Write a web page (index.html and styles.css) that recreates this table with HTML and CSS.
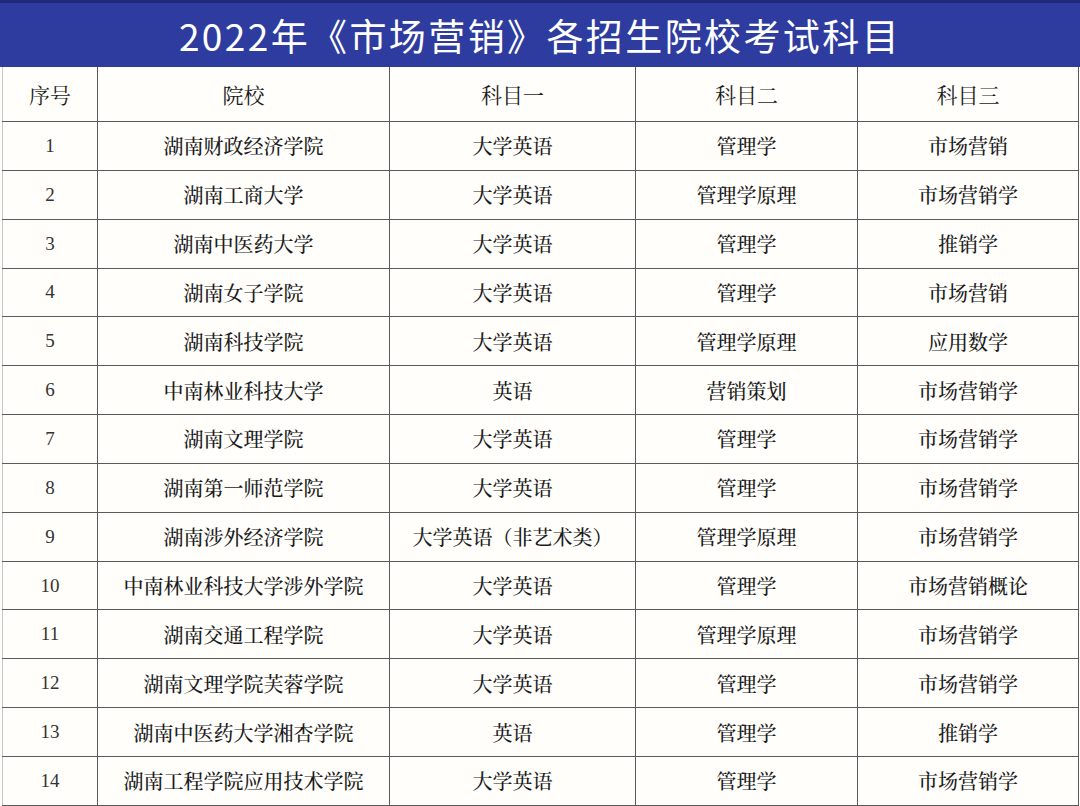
FILE: index.html
```html
<!DOCTYPE html>
<html lang="zh-CN">
<head>
<meta charset="utf-8">
<title>2022年《市场营销》各招生院校考试科目</title>
<link rel="stylesheet" href="styles.css">
</head>
<body>
<div class="page">
  <div class="title">2022年《市场营销》各招生院校考试科目</div>
  <table class="grid">
    <colgroup>
      <col class="c1"><col class="c2"><col class="c3"><col class="c4"><col class="c5">
    </colgroup>
    <thead>
      <tr><th>序号</th><th>院校</th><th>科目一</th><th>科目二</th><th>科目三</th></tr>
    </thead>
    <tbody>
      <tr><td class="num">1</td><td>湖南财政经济学院</td><td>大学英语</td><td>管理学</td><td>市场营销</td></tr>
      <tr><td class="num">2</td><td>湖南工商大学</td><td>大学英语</td><td>管理学原理</td><td>市场营销学</td></tr>
      <tr><td class="num">3</td><td>湖南中医药大学</td><td>大学英语</td><td>管理学</td><td>推销学</td></tr>
      <tr><td class="num">4</td><td>湖南女子学院</td><td>大学英语</td><td>管理学</td><td>市场营销</td></tr>
      <tr><td class="num">5</td><td>湖南科技学院</td><td>大学英语</td><td>管理学原理</td><td>应用数学</td></tr>
      <tr><td class="num">6</td><td>中南林业科技大学</td><td>英语</td><td>营销策划</td><td>市场营销学</td></tr>
      <tr><td class="num">7</td><td>湖南文理学院</td><td>大学英语</td><td>管理学</td><td>市场营销学</td></tr>
      <tr><td class="num">8</td><td>湖南第一师范学院</td><td>大学英语</td><td>管理学</td><td>市场营销学</td></tr>
      <tr><td class="num">9</td><td>湖南涉外经济学院</td><td>大学英语（非艺术类）</td><td>管理学原理</td><td>市场营销学</td></tr>
      <tr><td class="num">10</td><td>中南林业科技大学涉外学院</td><td>大学英语</td><td>管理学</td><td>市场营销概论</td></tr>
      <tr><td class="num">11</td><td>湖南交通工程学院</td><td>大学英语</td><td>管理学原理</td><td>市场营销学</td></tr>
      <tr><td class="num">12</td><td>湖南文理学院芙蓉学院</td><td>大学英语</td><td>管理学</td><td>市场营销学</td></tr>
      <tr><td class="num">13</td><td>湖南中医药大学湘杏学院</td><td>英语</td><td>管理学</td><td>推销学</td></tr>
      <tr><td class="num">14</td><td>湖南工程学院应用技术学院</td><td>大学英语</td><td>管理学</td><td>市场营销学</td></tr>
    </tbody>
  </table>
</div>
</body>
</html>
```

FILE: styles.css
```css
html, body {
  margin: 0;
  padding: 0;
  background: #fffefb;
}

.page {
  width: 1080px;
  height: 806px;
  overflow: hidden;
}

.title {
  height: 64px;
  border-top: 3px solid #1f2a7a;
  background: #2d3c9e;
  color: #ffffff;
  font-family: "Noto Sans CJK SC", "Noto Sans", sans-serif;
  font-weight: 400;
  font-size: 37px;
  letter-spacing: 2.4px;
  line-height: 64px;
  text-align: center;
}

.grid {
  margin-left: 2px;
  width: 1076px;
  border-collapse: collapse;
  table-layout: fixed;
  font-family: "Noto Serif CJK SC", "Liberation Serif", "Noto Sans CJK SC", serif;
  color: #1b1b1b;
  font-size: 20px;
}

.c1 { width: 95px; }
.c2 { width: 292px; }
.c3 { width: 246px; }
.c4 { width: 222px; }
.c5 { width: 221px; }

.grid th,
.grid td {
  border: 1px solid #5a5a5a;
  text-align: center;
  vertical-align: middle;
  padding: 0;
  font-weight: 500;
}

.grid th {
  height: 54px;
  font-size: 21px;
  font-weight: 400;
  border-top: none;
}

.grid td {
  height: 47.85px;
}

.grid tr > :first-child {
  border-left: 1px solid #c8c8c8;
}

.grid .num {
  font-family: "Liberation Serif", serif;
  font-size: 19px;
  font-weight: 400;
  color: #333;
}
```
